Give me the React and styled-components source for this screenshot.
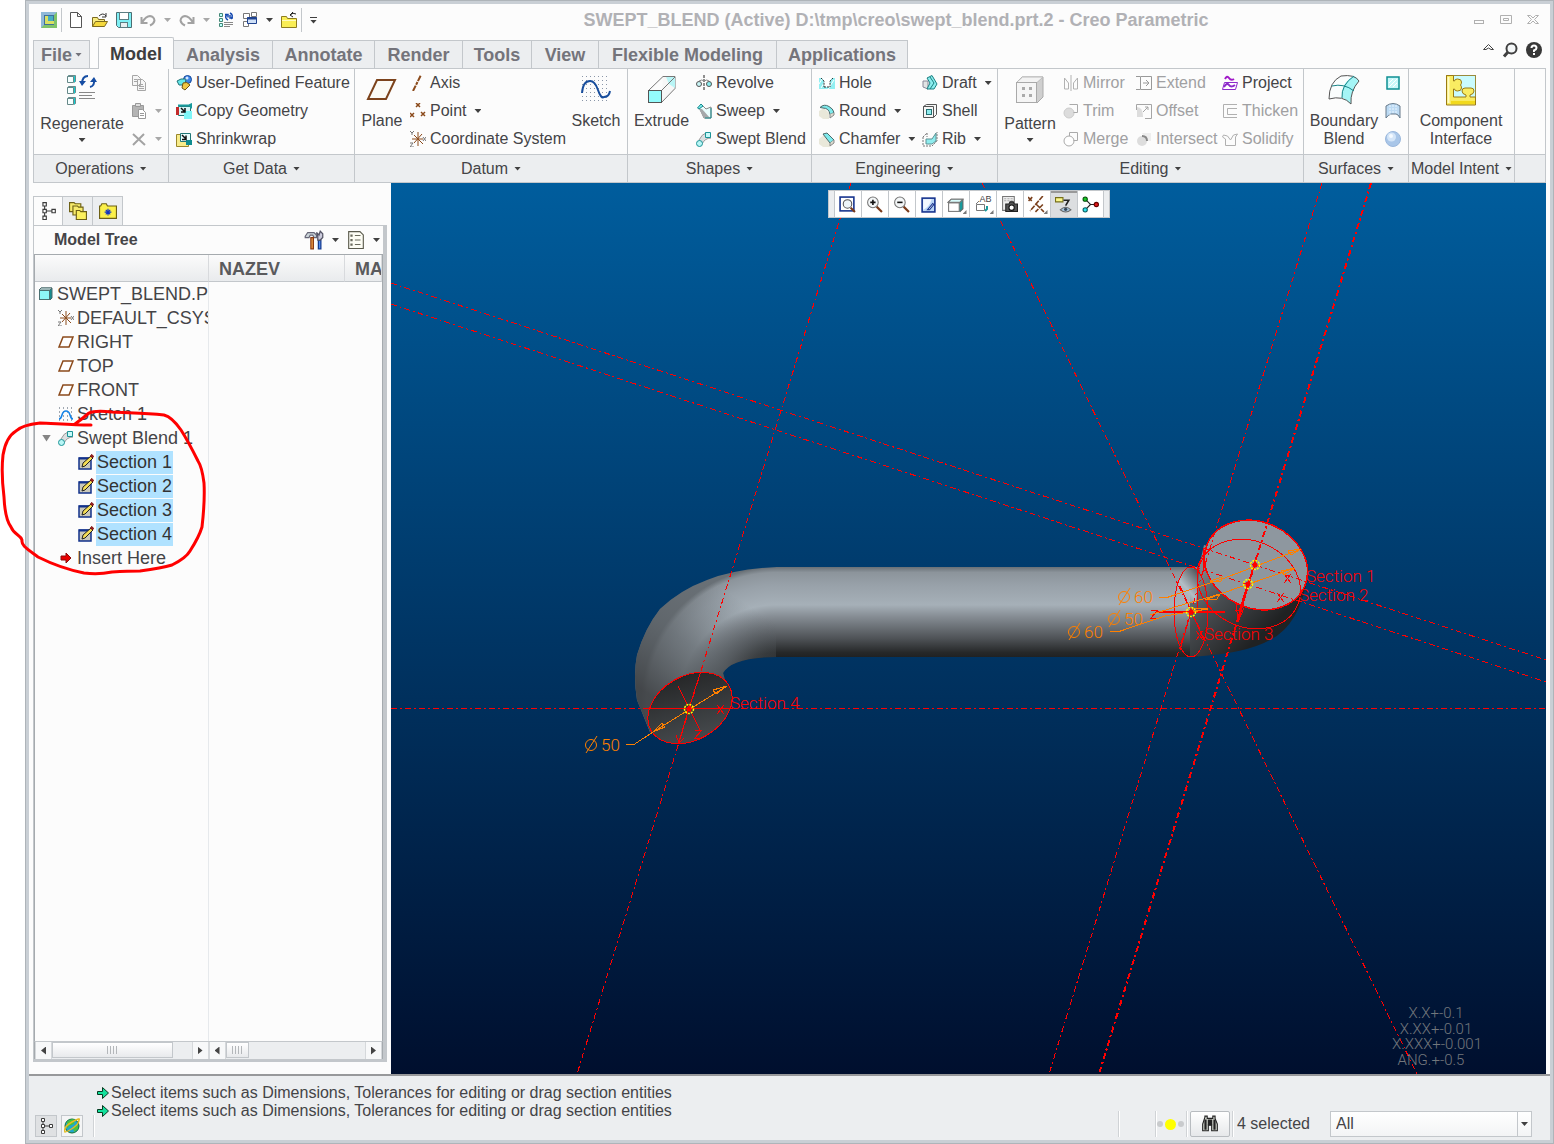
import { useState } from 'react'
import styled, { createGlobalStyle, css } from 'styled-components'

const edge = '#c3c7cb'
const panel = '#fcfcfc'
const soft = '#eceef0'
const ink = '#444447'

const icons = {
    app: <>
        <rect width="16" height="16" fill="#7fc36a" />
        <path d="M0 0h13v13H0z" fill="#b9dfe6" />
        <path d="M0 0h16L13 3H3v10L0 16z" fill="#8fb9d8" />
        <rect x="3" y="3" width="10" height="10" fill="#3f6f9c" />
        <path d="M4 4h3v5h6v3H4z" fill="#d9e063" />
        <rect x="7" y="4" width="5" height="5" fill="#45aec2" />
    </>,
    file: <path d="M2.500 .5h7l4 4v11h-11zM9.500 .5v4h4" fill="#fff" stroke="#555" />,
    open: <>
        <path d="M.5 14.500v-9h5l1 2h6v2" fill="#f8ec80" stroke="#7c6a1e" />
        <path d="M.5 14.500l3-5h12l-3 5z" fill="#f5d93d" stroke="#7c6a1e" />
        <path d="M7 4q4-4 7 0M14 1v4h-4" fill="none" stroke="#333" />
    </>,
    save: <>
        <path d="M.5 .5h15v15h-13l-2-2z" fill="#7ff0f5" stroke="#4b6d72" />
        <rect x="3.500" y=".5" width="9" height="7" fill="#fff" stroke="#5b7d82" />
        <rect x="4.500" y="10.500" width="7" height="5" fill="#e8eef0" stroke="#5b7d82" />
    </>,
    undo: <path d="M1.500 5v6h6M2 10.500Q6 4 10 4q4 .5 4.500 4.500-.5 3-4.500 5" fill="none" stroke="#a2a2a2" strokeWidth="2" />,
    redo: <path d="M14.500 5v6h-6M14 10.500Q10 4 6 4q-4 .5-4.500 4.500.5 3 4.500 5" fill="none" stroke="#a2a2a2" strokeWidth="2" />,
    regenSmall: <>
        <path d="M1.500 1.500h3v3h-3zM1.500 6.500h3v3h-3zM1.500 11.500h3v3h-3z" fill="#bff" stroke="#487" />
        <path d="M6 10.500h9M6 12.500h9M6 14.500h6" stroke="#888" />
        <path d="M10 8Q6 6 9 2M12 1q4 2 1 6M7 2.500h3v3M15 6h-3V3" fill="none" stroke="#1549b0" strokeWidth="1.500" />
    </>,
    windows: <>
        <path d="M1.500 1.500h6v5h-6zM9.500 .5h5v4h-5zM1.500 9.500h5v5h-5z" fill="#fff" stroke="#777" />
        <path d="M5.500 5.500h9v6h-9z" fill="#cfe0f7" stroke="#1f4390" />
        <path d="M5 6.500h10" stroke="#1f4390" strokeWidth="2" />
    </>,
    closeFolder: <>
        <path d="M.5 15.500v-11h5l1 2h9v9z" fill="#faee55" stroke="#8d7c20" />
        <path d="M1 8.500h14" stroke="#fffbc0" />
        <path d="M9 3q3-3 6-1M12 0L9 3l3 2" fill="none" stroke="#222" />
    </>,
    copy: <path d="M1.500 .5h5l3 3v7h-8zM6.500 4.500h5l3 3v8h-8zM3 4.500h3M3 6.500h3M8 9.500h4M8 11.500h5M8 13.500h5" fill="#f6f6f6" stroke="#a6a6a6" />,
    paste: <>
        <path d="M1.500 2.500h11v11h-11z" fill="#b4b4b4" stroke="#999" />
        <path d="M4.500 .5h5v3h-5z" fill="#ddd" stroke="#999" />
        <path d="M7.500 6.500h4l3 3v6h-7zM9 10.500h4M9 12.500h4" fill="#fff" stroke="#999" />
    </>,
    cut: <path d="M2 3l12 11M13 3L2 14" fill="none" stroke="#a3a3a3" strokeWidth="2" />,
    udf: <>
        <circle cx="11.500" cy="4.500" r="4" fill="#3c84e6" stroke="#17489a" />
        <path d="M1 6l4-2h5l-1 6H3z" fill="#63e8ea" stroke="#226f74" />
        <path d="M7 8q4-2 7 2l-5 5-3-2z" fill="#f1c844" stroke="#725612" />
        <circle cx="11" cy="3" r="1.500" fill="#d5e7ff" />
    </>,
    copyGeom: <>
        <path d="M2.500 3.500h12v9h-12z" fill="#d6f6f8" stroke="#277" />
        <path d="M0 4h3v8H0z" fill="#c32a2a" />
        <path d="M8 8h8v8H8z" fill="#7ff5f7" />
        <path d="M5 5l4 4M9 5v4H5" fill="none" stroke="#111" strokeWidth="1.500" />
        <path d="M2 2.500h11l2-1v4" fill="none" stroke="#189a9c" strokeWidth="2" />
    </>,
    shrink: <>
        <path d="M.5 3.500h12v12H.5z" fill="#f8ec8a" stroke="#9b872b" />
        <path d="M4.500 2.500h10v8h-10z" fill="#eaffff" stroke="#277" />
        <path d="M10 9h6v5h-6z" fill="#0f8c8f" />
        <path d="M6 4l4 4M10 4.500v4H6" fill="none" stroke="#111" strokeWidth="1.500" />
    </>,
    axis: <path d="M3 16L11 0" fill="none" stroke="#8b4a1b" strokeWidth="2" strokeDasharray="6 1 3 1" />,
    point: <path d="M6 0l4 4M10 0L6 4M0 10l4 4M4 10l-4 4M11 9l4 4M15 9l-4 4" fill="none" stroke="#8b4a1b" strokeWidth="1.500" />,
    csys: <>
        <path d="M8 1v14M2 8h11M4 4l9 9M12 3L4 12" stroke="#8b4a1b" />
        <path d="M0 0l2 2 2-2M2 2v2M0 12h3L0 16h4M13 6l3 4M16 6l-3 4" fill="none" stroke="#777" />
    </>,
    revolve: <>
        <circle cx="3" cy="9" r="2.500" fill="#c8f5f6" stroke="#555" />
        <circle cx="13" cy="9" r="2.500" fill="#8aeef0" stroke="#555" />
        <path d="M8 0v16" stroke="#222" strokeDasharray="3 1" />
        <path d="M3 6q3-2 5 0M13 6q-2-2-5 0" fill="none" stroke="#888" />
    </>,
    sweep: <>
        <path d="M3 4l3-2 4 4 5-2v11H8z" fill="#e9fdfd" stroke="#888" />
        <path d="M3 6l5 9h6L6 6z" fill="#a5a8aa" />
        <path d="M1.500 5L5 1l2 2-4 3z" fill="#7cecee" stroke="#188a8d" />
        <path d="M15 5v10H9" fill="none" stroke="#188a8d" />
    </>,
    swept: <>
        <path d="M3 9Q6 3 10 2l5 5Q9 7 6 13z" fill="#dddfe0" stroke="#999" />
        <path d="M9.500 1.500h5v5h-5z" fill="#c6fafa" stroke="#1d9497" />
        <circle cx="3.500" cy="12.500" r="3" fill="#b9f6f6" stroke="#1d9497" />
    </>,
    hole: <>
        <path d="M0 3h16v11H0z" fill="#92eff2" />
        <path d="M2 13l5-8M9 14l6-9M0 9l3-5" stroke="#fff" />
        <path d="M3 3h10l-2 3v6H5V6z" fill="#fff" />
        <path d="M2 3l3 3v6M14 3l-3 3v6M5 12h6" fill="none" stroke="#333" strokeDasharray="2 1" />
    </>,
    round: <>
        <path d="M0 8l5-3 5 5v6H4l-4-3z" fill="#e9e8da" />
        <path d="M1 4.500q4-4 9-1 4 2 5 6l-4 2Q10 5 4 5z" fill="#7eeaec" stroke="#4c6a6b" />
        <path d="M11 11v4l4-3v-2" fill="#dcdcd0" stroke="#888" />
    </>,
    chamfer: <>
        <path d="M0 8l5-4 6 6v6H4l-4-3z" fill="#e9e8da" />
        <path d="M4 3l4-1 7 7-4 3z" fill="#7eeaec" stroke="#4c6a6b" />
        <path d="M11 12v3l4-3V9" fill="#dcdcd0" stroke="#888" />
    </>,
    draft: <>
        <path d="M1 6h5v8l-5-2z" fill="#e1e4e4" stroke="#889" />
        <path d="M5 3l5-2.500L15 9l-3 5H5l3-6z" fill="#8bedee" stroke="#1b7f81" />
        <path d="M8 2l4 6-4 6" fill="none" stroke="#1b7f81" />
    </>,
    shell: <>
        <path d="M1.500 3.500h10v11h-10zM1.500 3.500l3-2h10v10l-3 3" fill="#f5f6f6" stroke="#555" />
        <rect x="4.500" y="6.500" width="5" height="5" fill="#8fecee" stroke="#257173" />
    </>,
    rib: <>
        <path d="M1 6l4-4M1 6v9h9l5-5V1M5 2v4" fill="none" stroke="#777" strokeDasharray="2 1" />
        <path d="M4 8h6l4-6v8l-4 3H4z" fill="#8fecee" stroke="#5c9193" />
    </>,
    mirror: <path d="M1.500 3v11h4V8zM14.500 3v11h-4V8zM8 0v16" fill="none" stroke="#b2b2b2" />,
    trim: <>
        <circle cx="6" cy="10" r="5" fill="#dcdcdc" stroke="#ccc" />
        <path d="M6.500 1.500h8v8h-4" fill="none" stroke="#aaa" />
    </>,
    merge: <>
        <circle cx="6" cy="10" r="5" fill="#fff" stroke="#aaa" />
        <path d="M6.500 5V1.500h8v8h-4" fill="none" stroke="#aaa" />
    </>,
    extend: <path d="M4.500 1.500h11v13h-11zM0 1.500h4M0 14.500h4M7 8h6M10 5l3 3-3 3" fill="none" stroke="#999" />,
    offset: <>
        <path d="M1 4q6 0 6 10H1z" fill="#ddd" />
        <path d="M.5 7V1.500h15v14H9M7 9l5-5M9 4h3v3" fill="none" stroke="#a5a5a5" />
    </>,
    intersect: <>
        <circle cx="6" cy="10" r="5" fill="#ddd" />
        <path d="M6 2h9v8h-4z" fill="#eee" />
        <path d="M6 5q5 0 5 5" fill="none" stroke="#888" strokeWidth="2" />
    </>,
    project: <>
        <path d="M3 4q2-4 4-1t5 1" fill="none" stroke="#a018c8" strokeWidth="2" />
        <path d="M2.500 7.500h13l-2 7H.5z" fill="#fff" stroke="#8d2aca" />
        <path d="M2 12q3-5 5-2t6 0" fill="none" stroke="#8d2aca" strokeWidth="2" />
    </>,
    thicken: <path d="M15 1.500H1.500v13H15M15 5.500H5.500v6H15" fill="none" stroke="#b0b0b0" />,
    solidify: <path d="M3.500 14.500h10V6l2-3-4 1-3 5-3-4-4-1-1 2 3 2z" fill="none" stroke="#b0b0b0" />,
    fill: <>
        <rect x="2" y="2" width="12" height="12" fill="#c9f8fa" stroke="#0d8f93" strokeWidth="1.500" />
        <path d="M4 12l8-8M4 8l4-4M8 12l4-4" stroke="#fff" />
    </>,
    style: <>
        <path d="M1 3q7-5 14 0v12q-2-4-4-4H6q-3 1-5 4z" fill="#bcdaf3" stroke="#66798a" />
        <path d="M5 2v10M8 2v9M11 2v9" stroke="#eaf5ff" strokeDasharray="2 1" />
    </>,
    sphere: <>
        <circle cx="8" cy="8" r="7.500" fill="#a9c6e8" stroke="#9ab7dc" />
        <circle cx="6.500" cy="6" r="4.500" fill="#d4e5f8" />
        <circle cx="6" cy="5" r="2" fill="#f4faff" />
    </>,
    part: <>
        <path d="M1 4l2-2h11v10l-2 2" fill="#188c8f" stroke="#4a6a6c" />
        <path d="M1 4l2-2h11l-2 2z" fill="#eaffff" stroke="#4a6a6c" />
        <rect x="1.500" y="4.500" width="10" height="9" fill="#8ef6f8" stroke="#4a7072" />
    </>,
    viewPart: <>
        <path d="M1 6l3-3h11v9l-3 3" fill="#189a9c" stroke="#666" />
        <path d="M1 6l3-3h11l-3 3z" fill="#d9fdfd" stroke="#777" />
        <rect x="1.500" y="6.500" width="10" height="8" fill="#fff" stroke="#777" />
    </>,
    plane: <path d="M5 3h10l-4 10H1z" fill="#fff" stroke="#8b4a1b" strokeWidth="1.500" />,
    sketch: <>
        <path d="M1 2h15M1 6h15M1 10h15M1 14h15" stroke="#456" strokeDasharray="1 3" />
        <path d="M1 13q2 0 3-4t4-4 4 4 3 4" fill="none" stroke="#1383e8" strokeWidth="1.500" />
    </>,
    section: <>
        <rect x="1" y="4" width="12" height="11" fill="#c9c8ba" stroke="#10318a" strokeWidth="1.500" />
        <path d="M1 4.500h12" stroke="#10318a" strokeWidth="2" />
        <path d="M4 13l1-4 8-7 2 2-8 8z" fill="#f4dd55" stroke="#222" />
        <path d="M12.500 2l1-1.500 2 1.500-1 2z" fill="#b92323" stroke="#701010" />
    </>,
    insert: <path d="M3 6h5V3l5 5-5 5v-3H3z" fill="#e80000" stroke="#8b0b0b" />,
    tree: <path d="M3.500 .5h3v3h-3zM3.500 6.500h3v3h-3zM3.500 12.500h3v3h-3zM11.500 6.500h3v3h-3zM5 3.500v3M5 9.500v3M6.500 8h5" fill="#fff" stroke="#3c3c3c" />,
    globe: <>
        <circle cx="8" cy="8" r="7" fill="#20a7cf" stroke="#14702f" />
        <path d="M3 4q4-4 8-2l-1 4-5 2-2 3zM9 9l5-3v5l-4 3z" fill="#4bc43c" />
        <path d="M1 14Q-1 9 8 4t7-2q0 4-6 8t-8 4z" fill="none" stroke="#e5bb25" strokeWidth="1.500" />
    </>,
    binoculars: <>
        <path d="M3.500 2v-1h2v2h5V1h2v2l2 5v6h-5V9h-3v5h-5V8z" fill="#d9ddd5" stroke="#222" />
        <path d="M4 4v9M12 4v9M7 4v5M9 4v5" stroke="#222" strokeWidth="2" />
    </>,
    layers: <>
        <path d="M.5 8.500v-8h4l1 1h5v7z" fill="#f7eb6c" stroke="#6d6015" />
        <path d="M3.500 11.500v-8h4l1 1h4v7z" fill="#f7eb6c" stroke="#6d6015" />
        <path d="M6.500 15.500v-8h3l1 1h5v7z" fill="#fbf05e" stroke="#6d6015" />
    </>,
    favorites: <>
        <path d="M.5 14.500V3.500h1l1-2h4l1 2h8v11z" fill="#fbf04a" stroke="#6d6015" />
        <path d="M8 6v6M5 9h6M6 7l4 4M10 7l-4 4" stroke="#1234c0" />
    </>,
    tools: <>
        <path d="M1 5l2-3h5l2 2v2H8L7 4H5L4 6H1z" fill="#ccd6da" stroke="#667" />
        <path d="M5.500 6h2v9h-2z" fill="#f0a24a" stroke="#8b3a12" />
        <path d="M11.500 8h2v7h-2z" fill="#4f8bf0" stroke="#143b8f" />
        <path d="M11 8V5l-1-3 2 2 1-3 2 2v3l-2 2z" fill="#ccd" stroke="#556" />
    </>,
    list: <>
        <path d="M1.500 .5h10l3 3v12h-13z" fill="#fdfdf4" stroke="#5a5a4c" />
        <path d="M3.500 3.500h1v1h-1zM3.500 7.500h1v1h-1zM3.500 11.500h1v1h-1zM7 4h5M7 8h5M7 12h5" fill="none" stroke="#6a6a5c" />
    </>,
    zoomFit: <>
        <rect x="1" y="1" width="13" height="13" fill="#fff" stroke="#16338e" strokeWidth="1.500" />
        <path d="M11 11l4 4" stroke="#7a3a1a" strokeWidth="2" />
        <circle cx="8" cy="7.500" r="4" fill="#eef6fa" stroke="#555" />
    </>,
    zoomIn: <>
        <path d="M10 10l5 5" stroke="#7a3a1a" strokeWidth="2" />
        <circle cx="6.500" cy="6" r="5" fill="#f4f7f8" stroke="#777" />
        <path d="M4 6h5M6.500 3.500v5" stroke="#111" strokeWidth="1.500" />
    </>,
    zoomOut: <>
        <path d="M10 10l5 5" stroke="#7a3a1a" strokeWidth="2" />
        <circle cx="6.500" cy="6" r="5" fill="#f4f7f8" stroke="#777" />
        <path d="M4 6h5" stroke="#111" strokeWidth="1.500" />
    </>,
    repaint: <>
        <rect x="2" y="2" width="12" height="13" fill="#bcd7f7" stroke="#16338e" strokeWidth="1.500" />
        <path d="M3 3h8Q9 10 3 13z" fill="#f4f9ff" />
        <path d="M7 13l5-6 1 1-4 5z" fill="#fff" stroke="#16338e" />
    </>,
    saved: <>
        <path d="M1 8l3-3h4M1.500 8.500h8v6h-8z" fill="#fff" stroke="#777" />
        <path d="M12 10v3l-2 2" fill="none" stroke="#189a9c" strokeWidth="2" />
    </>,
    camera: <>
        <path d="M1.500 .5h11v13h-11z" fill="#eee" stroke="#777" />
        <path d="M3 2.500h8M3 4.500h8" stroke="#aaa" strokeDasharray="2 1" />
        <path d="M4.500 7.500h3l1-2h3l1 2h3v7h-11z" fill="#555" stroke="#222" />
        <circle cx="10" cy="11" r="2.500" fill="#fff" stroke="#111" />
    </>,
    datum: <path d="M0 1l4 4M4 1L0 5M14 0L2 14M8 8l7 7M14 8l-7 7" stroke="#7a3f1b" strokeWidth="1.500" strokeDasharray="5 1" />,
    annot: <>
        <path d="M.5 1.500h7v4h-7z" fill="#fbf78c" stroke="#77701a" />
        <path d="M8 4h5l-3 5" fill="none" stroke="#222" strokeWidth="1.500" />
        <path d="M5 13q5-5 10 0-5 4-10 0z" fill="#a6c4dc" stroke="#666" />
        <circle cx="10" cy="12.500" r="1.500" fill="#345" />
    </>,
    spin: <>
        <path d="M3 3l5 5h6M8 8l-5 5" fill="none" stroke="#222" />
        <circle cx="3" cy="3" r="2" fill="#19c926" stroke="#064d0b" />
        <circle cx="3" cy="13" r="2" fill="#2de3ea" stroke="#075c60" />
        <circle cx="13.500" cy="8" r="2" fill="#e01818" stroke="#600" />
    </>,
    arrow: <path d="M2.500 6.500h5v-4l6 5.500-6 5.500v-4h-5z" fill="#12e09c" stroke="#053a20" />,
    minimize: <rect x="3.500" y="8.500" width="9" height="3" fill="none" stroke="#b0b0b0" />,
    restore: <path d="M2.500 3.500h11v8h-11zM5.500 6.500h5v2h-5z" fill="none" stroke="#b0b0b0" />,
    close: <path d="M2.500 3.500h3l2.500 2.500 2.500-2.500h3l-4 4 4 4h-3l-2.500-2.500-2.500 2.500h-3l4-4z" fill="none" stroke="#b0b0b0" />,
    collapse: <path d="M5.500 7.500l5-5 5 5h-2.500L10.500 6 8 7.500z" fill="#fff" stroke="#444" />,
    search: <>
        <circle cx="9.500" cy="6.500" r="5" fill="#f4f7f8" stroke="#404040" strokeWidth="2" />
        <path d="M6 10l-4 4.500" stroke="#404040" strokeWidth="3" />
    </>,
    help: <>
        <circle cx="8" cy="8" r="8" fill="#383838" />
        <path d="M5.500 6q0-2.500 2.500-2.500T10.500 6q0 1.500-2.500 2.500v1.500" fill="none" stroke="#fff" strokeWidth="2" />
        <rect x="7" y="11" width="2" height="2" fill="#fff" />
    </>,
    bigRegen: <>
        <path d="M1.500 2.500l1-1h7v6l-1 1M1.500 13.500l1-1h7v6l-1 1M1.500 24.500l1-1h7v6l-1 1" fill="#13cfd2" stroke="#6b8b8c" />
        <path d="M1.500 2.500h6v6h-6zM1.500 13.500h6v6h-6zM1.500 24.500h6v6h-6z" fill="#f6ffff" stroke="#688" />
        <path d="M13 18.500h16M13 21.500h13M13 24.500h16" stroke="#888" />
        <path d="M22 2q-6 0-6 8M24 13q5-1 4-8" fill="none" stroke="#164da3" strokeWidth="2" />
        <path d="M13 7h7l-4 5zM24 8l4-5 3 5z" fill="#164da3" />
    </>,
    bigPlane: <path d="M11 6h18l-9 19H2z" fill="#fbfbf6" stroke="#7c431c" strokeWidth="2" />,
    bigSketch: <>
        <path d="M2 2.500h28M2 6.500h28M2 10.500h28M2 14.500h28M2 18.500h28M2 22.500h28M2 26.500h28" stroke="#8a96a8" strokeDasharray="1 3" />
        <path d="M2 19Q3 7 10 7q5 0 8 9t6 7q5 0 6-6" fill="none" stroke="#174d9c" strokeWidth="2" />
    </>,
    bigExtrude: <>
        <path d="M17 2.500h12v12L15.500 28.500M2.500 16.500L17 2.500" fill="#f7f7f7" stroke="#777" />
        <path d="M20 3h9v11l-6-4z" fill="#b9f5f6" />
        <path d="M29 3L15.500 16.500" stroke="#777" />
        <rect x="2.500" y="16.500" width="13" height="12" fill="#94fbfc" stroke="#555" />
    </>,
    bigPattern: <>
        <path d="M2 9l6-6h21v20l-6 6z" fill="#cfcfcf" stroke="#aaa" />
        <path d="M2.500 8.500l6-5.500H29l-6 5.500z" fill="#f3f3f3" stroke="#bbb" />
        <rect x="2.500" y="8.500" width="20" height="20" fill="#f5f5f5" stroke="#a9a9a9" />
        <path d="M8 13h3v3H8zM15 13h3v3h-3zM8 20h3v3H8zM15 20h3v3h-3z" fill="#aaa" />
    </>,
    bigBlend: <>
        <path d="M1 25Q1 8 13 2q14-2 18 5-9 10-8 23-8-9-22-5z" fill="#fafdfd" />
        <path d="M16 11Q21 4 26 2q4 2 5 5-9 10-8 23l-9-7q0-8 2-12z" fill="#a5f5f6" />
        <path d="M1 25Q1 8 13 2q14-2 18 5-9 10-8 23-8-9-22-5z" fill="none" stroke="#555" />
        <path d="M4 12q12-3 22 5M26 2Q13 11 14 24" fill="none" stroke="#178387" />
    </>,
    bigComponent: <>
        <rect x="1.500" y="1.500" width="29" height="29" fill="#c9fbfd" stroke="#9a8a3c" />
        <path d="M1.500 1.500H8.500V7h1q0-2 3-2 4 0 4 3 0 2-1 3 1 1 1 3 0 3-4 3-3 0-3-2h-1v8H21v-2q-4-1-4-4 0-3 3-3h6q3 0 3 3t-4 4v2h5.500v8H1.500z" fill="#f9ec62" stroke="#9a7a14" />
        <path d="M3.500 3v26" stroke="#fffbc6" strokeWidth="2" />
        <path d="M6 28.500h24" stroke="#f2d91c" strokeWidth="3" />
    </>,
}

function Icon({ name, size = 16 }) {
    const box = name.startsWith('big') ? 32 : 16
    return <Glyph viewBox={`0 0 ${box} ${box}`} $size={box === 32 ? 32 : size} aria-hidden="true">{icons[name]}</Glyph>
}

function Tool({ icon, text, menu, off }) {
    return (
        <SmallTool disabled={off} aria-label={text || icon}>
            <Icon name={icon} />
            {text}
            {menu && <Caret />}
        </SmallTool>
    )
}

function BigTool({ icon, text, menu, width }) {
    return (
        <LargeTool $menu={menu} $w={width}>
            <Icon name={icon} />
            <span>{text}</span>
            {menu && <Caret />}
        </LargeTool>
    )
}

function Group({ name, width, children }) {
    return (
        <GroupBox $w={width}>
            <GroupBody>{children}</GroupBody>
            <GroupName>{name}<Caret /></GroupName>
        </GroupBox>
    )
}

const tabs = [
    ['Analysis', 99], ['Annotate', 102], ['Render', 88], ['Tools', 69],
    ['View', 67], ['Flexible Modeling', 178], ['Applications', 131],
]

const nodes = [
    { icon: 'part', text: 'SWEPT_BLEND.P', depth: 0 },
    { icon: 'csys', text: 'DEFAULT_CSYS', depth: 1 },
    { icon: 'plane', text: 'RIGHT', depth: 1 },
    { icon: 'plane', text: 'TOP', depth: 1 },
    { icon: 'plane', text: 'FRONT', depth: 1 },
    { icon: 'sketch', text: 'Sketch 1', depth: 1 },
    { icon: 'swept', text: 'Swept Blend 1', depth: 1, open: true },
    { icon: 'section', text: 'Section 1', depth: 2, picked: true },
    { icon: 'section', text: 'Section 2', depth: 2, picked: true },
    { icon: 'section', text: 'Section 3', depth: 2, picked: true },
    { icon: 'section', text: 'Section 4', depth: 2, picked: true },
    { icon: 'insert', text: 'Insert Here', depth: 1 },
]

const viewTools = ['zoomFit', 'zoomIn', 'zoomOut', 'repaint', 'viewPart', 'saved', 'camera', 'datum', 'annot', 'spin']
const message = 'Select items such as Dimensions, Tolerances for editing or drag section entities'

export default function App() {
    const [filter, setFilter] = useState('All')

    return (
        <>
            <Reset />
            <Frame>
                <Main>
                    <TitleBar>
                        <QuickBar>
                            <IconButton aria-label="Creo"><Icon name="app" /></IconButton>
                            <Divider />
                            <IconButton aria-label="New"><Icon name="file" /></IconButton>
                            <IconButton aria-label="Open"><Icon name="open" /></IconButton>
                            <IconButton aria-label="Save"><Icon name="save" /></IconButton>
                            <IconButton aria-label="Undo"><Icon name="undo" /></IconButton>
                            <Caret $off />
                            <IconButton aria-label="Redo"><Icon name="redo" /></IconButton>
                            <Caret $off />
                            <IconButton aria-label="Regenerate"><Icon name="regenSmall" /></IconButton>
                            <IconButton aria-label="Windows"><Icon name="windows" /></IconButton>
                            <Caret />
                            <IconButton aria-label="Close"><Icon name="closeFolder" /></IconButton>
                            <Divider />
                            <MoreCaret aria-label="Customize"><Caret /></MoreCaret>
                        </QuickBar>
                        <Title>SWEPT_BLEND (Active) D:\tmp\creo\swept_blend.prt.2 - Creo Parametric</Title>
                        <WindowButtons>
                            <IconButton aria-label="Minimize"><Icon name="minimize" /></IconButton>
                            <IconButton aria-label="Restore"><Icon name="restore" /></IconButton>
                            <IconButton aria-label="Close window"><Icon name="close" /></IconButton>
                        </WindowButtons>
                    </TitleBar>

                    <TabBar>
                        <FileTab>File<Caret /></FileTab>
                        <ActiveTab>Model</ActiveTab>
                        {tabs.map(([name, width]) => <Tab key={name} $w={width}>{name}</Tab>)}
                        <Help>
                            <IconButton aria-label="Collapse"><Icon name="collapse" /></IconButton>
                            <IconButton aria-label="Search"><Icon name="search" /></IconButton>
                            <IconButton aria-label="Help"><Icon name="help" /></IconButton>
                        </Help>
                    </TabBar>

                    <Ribbon>
                        <Group name="Operations" width={135}>
                            <BigTool icon="bigRegen" text="Regenerate" menu width={82} />
                            <Column>
                                <Tool icon="copy" off />
                                <Tool icon="paste" menu off />
                                <Tool icon="cut" menu off />
                            </Column>
                        </Group>
                        <Group name="Get Data" width={186}>
                            <Column>
                                <Tool icon="udf" text="User-Defined Feature" />
                                <Tool icon="copyGeom" text="Copy Geometry" />
                                <Tool icon="shrink" text="Shrinkwrap" />
                            </Column>
                        </Group>
                        <Group name="Datum" width={273}>
                            <BigTool icon="bigPlane" text="Plane" width={40} />
                            <Column $w={154}>
                                <Tool icon="axis" text="Axis" />
                                <Tool icon="point" text="Point" menu />
                                <Tool icon="csys" text="Coordinate System" />
                            </Column>
                            <BigTool icon="bigSketch" text="Sketch" width={48} />
                        </Group>
                        <Group name="Shapes" width={184}>
                            <BigTool icon="bigExtrude" text="Extrude" width={53} />
                            <Column>
                                <Tool icon="revolve" text="Revolve" />
                                <Tool icon="sweep" text="Sweep" menu />
                                <Tool icon="swept" text="Swept Blend" />
                            </Column>
                        </Group>
                        <Group name="Engineering" width={186}>
                            <Column $w={95}>
                                <Tool icon="hole" text="Hole" />
                                <Tool icon="round" text="Round" menu />
                                <Tool icon="chamfer" text="Chamfer" menu />
                            </Column>
                            <Column>
                                <Tool icon="draft" text="Draft" menu />
                                <Tool icon="shell" text="Shell" />
                                <Tool icon="rib" text="Rib" menu />
                            </Column>
                        </Group>
                        <Group name="Editing" width={306}>
                            <BigTool icon="bigPattern" text="Pattern" menu width={50} />
                            <Column $w={65}>
                                <Tool icon="mirror" text="Mirror" off />
                                <Tool icon="trim" text="Trim" off />
                                <Tool icon="merge" text="Merge" off />
                            </Column>
                            <Column $w={78}>
                                <Tool icon="extend" text="Extend" off />
                                <Tool icon="offset" text="Offset" off />
                                <Tool icon="intersect" text="Intersect" off />
                            </Column>
                            <Column>
                                <Tool icon="project" text="Project" />
                                <Tool icon="thicken" text="Thicken" off />
                                <Tool icon="solidify" text="Solidify" off />
                            </Column>
                        </Group>
                        <Group name="Surfaces" width={105}>
                            <BigTool icon="bigBlend" text="Boundary Blend" width={66} />
                            <Column>
                                <Tool icon="fill" />
                                <Tool icon="style" />
                                <Tool icon="sphere" />
                            </Column>
                        </Group>
                        <Group name="Model Intent" width={106}>
                            <BigTool icon="bigComponent" text="Component Interface" width={90} />
                        </Group>
                        <GroupBox>
                            <GroupBody />
                            <GroupName />
                        </GroupBox>
                    </Ribbon>

                    <Work>
                        <Sidebar>
                            <PaneTabs>
                                <PaneTab $on aria-label="Model Tree"><Icon name="tree" size={18} /></PaneTab>
                                <PaneTab aria-label="Layers"><Icon name="layers" size={18} /></PaneTab>
                                <PaneTab aria-label="Favorites"><Icon name="favorites" size={18} /></PaneTab>
                            </PaneTabs>
                            <Pane>
                                <PaneHead>
                                    <h2>Model Tree</h2>
                                    <IconButton aria-label="Settings"><Icon name="tools" size={20} /></IconButton>
                                    <Caret />
                                    <IconButton aria-label="Show"><Icon name="list" size={18} /></IconButton>
                                    <Caret />
                                </PaneHead>
                                <TreeBox>
                                    <TreeTable>
                                        <colgroup>
                                            <col width="174" />
                                            <col width="136" />
                                            <col />
                                        </colgroup>
                                        <thead>
                                            <tr><th aria-label="Item" /><th>NAZEV</th><th>MA</th></tr>
                                        </thead>
                                        <tbody>
                                            {nodes.map((node) =>
                                                <tr key={node.text}>
                                                    <td>
                                                        <Node>
                                                            <Indent $depth={node.depth}>{node.open && <Expander />}</Indent>
                                                            <Icon name={node.icon} />
                                                            <NodeName $picked={node.picked}>{node.text}</NodeName>
                                                        </Node>
                                                    </td>
                                                    <td />
                                                    <td />
                                                </tr>)}
                                        </tbody>
                                    </TreeTable>
                                </TreeBox>
                                <Scrolls>
                                    <ScrollBar>
                                        <ScrollEnd aria-label="Scroll left"><Triangle $left /></ScrollEnd>
                                        <Thumb $w={121}><Grip /></Thumb>
                                        <ScrollEnd aria-label="Scroll right"><Triangle /></ScrollEnd>
                                    </ScrollBar>
                                    <ScrollBar>
                                        <ScrollEnd aria-label="Scroll left"><Triangle $left /></ScrollEnd>
                                        <Thumb $w={23}><Grip /></Thumb>
                                        <ScrollEnd aria-label="Scroll right"><Triangle /></ScrollEnd>
                                    </ScrollBar>
                                </Scrolls>
                            </Pane>
                        </Sidebar>
                        <Viewport>
                            <Scene />
                            <ViewBar>
                                {viewTools.map((name) =>
                                    <ViewButton key={name} aria-label={name} $on={name === 'annot'}>
                                        <Icon name={name} size={name === 'saved' ? 16 : 17} />
                                        {name === 'saved' && <Badge>AB</Badge>}
                                        {['viewPart', 'saved', 'datum'].includes(name) && <Corner />}
                                    </ViewButton>)}
                            </ViewBar>
                        </Viewport>
                    </Work>

                    <StatusBar>
                        <PaneSwitch>
                            <StatusButton $on aria-label="Toggle tree"><Icon name="tree" /></StatusButton>
                            <StatusButton aria-label="Toggle browser"><Icon name="globe" /></StatusButton>
                            <StatusLine />
                        </PaneSwitch>
                        <Messages>
                            <li><Icon name="arrow" />{message}</li>
                            <li><Icon name="arrow" />{message}</li>
                        </Messages>
                        <StatusTools>
                            <StatusLine />
                            <Spacer />
                            <StatusLine />
                            <Lights><i /><b /><i /></Lights>
                            <StatusLine />
                            <FindButton aria-label="Find"><Icon name="binoculars" size={18} /></FindButton>
                            <StatusLine />
                            <Count>4 selected</Count>
                            <Filter>
                                <select aria-label="Selection filter" value={filter} onChange={(e) => setFilter(e.target.value)}>
                                    <option>All</option>
                                </select>
                                <FilterArrow><Caret /></FilterArrow>
                            </Filter>
                        </StatusTools>
                    </StatusBar>
                </Main>
            </Frame>
            <Marker viewBox="0 0 210 180" aria-hidden="true">
                <path d="M91 24C70 24 50 22 40 22Q22 24 16 30Q6 36 3 54Q1 72 4 96Q5 118 11 126C14 134 21 134 22 139C21 144 26 147 38 156C50 162 64 168 84 172Q98 174 112 171Q128 170 140 170Q162 167 172 164Q186 157 190 150Q199 136 202 126Q205 100 204 82Q202 66 198 60C193 50 188 40 181 29Q172 16 164 14C145 12 130 12 112 11Q95 9 89 12Q82 18 75 23" />
            </Marker>
        </>
    )
}

function Diameter({ x, y, value }) {
    return (
        <g>
            <circle cx={x} cy={y - 6} r="5.500" fill="none" stroke="#ff8000" />
            <path d={`M${x - 5} ${y + 2}L${x + 6} ${y - 15}`} stroke="#ff8000" />
            <text x={x + 10} y={y} fill="#ff8000">{value}</text>
        </g>
    )
}

function Hub({ x, y }) {
    return (
        <g fill="none">
            <circle cx={x} cy={y} r="2.500" fill="#f00" />
            <circle cx={x} cy={y} r="4.500" stroke="#ffff00" strokeWidth="1.500" strokeDasharray="2 1" />
        </g>
    )
}

const elbow = 'M777 567Q735 569 707 580Q680 590 660 609Q645 628 637 655Q633 675 637 700L650 732L690 735L728 690L723 673Q732 657 777 657Z'

function Scene() {
    return (
        <Canvas viewBox="391 183 1155 891" preserveAspectRatio="xMidYMid slice">
            <defs>
                <linearGradient id="tube" gradientUnits="userSpaceOnUse" x1="0" y1="567" x2="0" y2="657">
                    <stop offset="0" stopColor="#697076" />
                    <stop offset=".06" stopColor="#8c949b" />
                    <stop offset=".2" stopColor="#98a1a9" />
                    <stop offset=".42" stopColor="#a6b0b8" />
                    <stop offset=".55" stopColor="#868d94" />
                    <stop offset=".8" stopColor="#4d5155" />
                    <stop offset=".95" stopColor="#262829" />
                    <stop offset="1" stopColor="#202223" />
                </linearGradient>
                <radialGradient id="elbow" gradientUnits="userSpaceOnUse" cx="776" cy="702" r="141">
                    <stop offset=".319" stopColor="#202223" />
                    <stop offset=".351" stopColor="#262829" />
                    <stop offset=".447" stopColor="#4d5155" />
                    <stop offset=".606" stopColor="#868d94" />
                    <stop offset=".689" stopColor="#a6b0b8" />
                    <stop offset=".83" stopColor="#98a1a9" />
                    <stop offset=".919" stopColor="#8c949b" />
                    <stop offset=".957" stopColor="#697076" />
                </radialGradient>
                <linearGradient id="shade" gradientUnits="userSpaceOnUse" x1="728" y1="592" x2="658" y2="700">
                    <stop offset="0" stopColor="#62686d" stopOpacity="0" />
                    <stop offset=".5" stopColor="#5a6065" stopOpacity=".65" />
                    <stop offset="1" stopColor="#404346" stopOpacity=".92" />
                </linearGradient>
                <linearGradient id="cap" gradientUnits="userSpaceOnUse" x1="715" y1="675" x2="700" y2="740">
                    <stop offset="0" stopColor="#242526" />
                    <stop offset="1" stopColor="#44484b" />
                </linearGradient>
                <linearGradient id="neck" gradientUnits="userSpaceOnUse" x1="1190" y1="580" x2="1250" y2="645">
                    <stop offset="0" stopColor="#7d858b" />
                    <stop offset=".4" stopColor="#484c50" />
                    <stop offset="1" stopColor="#202223" />
                </linearGradient>
                <linearGradient id="glow" gradientUnits="userSpaceOnUse" x1="1172" y1="600" x2="1200" y2="575">
                    <stop offset="0" stopColor="#a6b0b8" stopOpacity="0" />
                    <stop offset=".5" stopColor="#b3bdc5" />
                    <stop offset="1" stopColor="#555a5f" />
                </linearGradient>
            </defs>

            <path d={elbow} fill="url(#elbow)" />
            <path d={elbow} fill="url(#shade)" />
            <path d="M776 567H1198V657H776Z" fill="url(#tube)" />
            <path d="M1190 567L1199 567L1204 545L1308 575Q1300 625 1270 640Q1245 654 1190 657Z" fill="url(#neck)" />
            <path d="M1176 603Q1177 570 1191 568L1200 570L1196 603Z" fill="url(#glow)" />
            <g shapeRendering="crispEdges">
                <ellipse cx="690" cy="708" rx="45" ry="32" transform="rotate(-30 690 708)" fill="url(#cap)" stroke="#f00" />
                <ellipse cx="1256" cy="565" rx="53" ry="43" transform="rotate(24 1256 565)" fill="#8e979f" stroke="#f00" strokeWidth="1.500" />
            </g>

            <g fill="none" stroke="#f00" shapeRendering="crispEdges">
                <g strokeDasharray="6 3 2 3">
                    <path d="M851 183L577 1074M982 183L1417 1074M391 283L1546 660M391 304L1546 682M1322 183L1049 1074M391 708.500H1546" />
                    <path d="M1371 183L1099 1074" strokeWidth="2" />
                </g>
                <ellipse cx="1249" cy="584" rx="53" ry="43" transform="rotate(24 1249 584)" />
                <ellipse cx="1191" cy="612" rx="17" ry="45" />
                <path d="M1197 610V568L1206 548M1203 572V548" />
                <path d="M1156 612H1225M1257 555L1238 620M1248 584L1240 610" strokeWidth="2" />
                <path d="M1236 602L1238 622L1244 608M1235 610H1243" />
                <path d="M1191 612L1180 650M1180 586L1204 640M1151 610H1158L1151 618H1158" />
                <path d="M650 708.500H732M678 686L701 732M689 708L700 674M689 708L679 742M676 735L679 743L684 738M695 730H702L695 738H702" />
                <path d="M1284 574l7 9M1291 574l-7 9M1277 593l7 9M1284 593l-7 9M1196 631l7 9M1203 631l-7 9M717 705l7 9M724 705l-7 9" />
            </g>
            <g fill="none" stroke="#ff8000" shapeRendering="crispEdges">
                <path d="M1159 597.500H1167L1222 579L1301 549M1288 551L1301 549L1291 555ZM1210 581L1222 577L1221 581Z" />
                <path d="M1150 615L1175 607L1220 594L1295 568M1281 571L1295 568L1284 575ZM1205 600L1220 594L1217 599Z" />
                <path d="M1110 631.500H1119L1165 616L1208 609M1192 609L1208 608L1195 612Z" />
                <path d="M626 744.500H634L653 732L727 686M653 732L662 723L665 727ZM727 686L713 690L716 694Z" />
            </g>
            <Hub x={1255} y={565} />
            <Hub x={1248} y={584} />
            <Hub x={1191} y={612} />
            <Hub x={689} y={709} />
            <Diameter x={1124} y={603} value="60" />
            <Diameter x={1114} y={625} value="50" />
            <Diameter x={1074} y={638} value="60" />
            <Diameter x={591} y={751} value="50" />
            <g fill="#f00">
                <text x="1306" y="582">Section 1</text>
                <text x="1299" y="601">Section 2</text>
                <text x="1204" y="640">Section 3</text>
                <text x="730" y="709">Section 4</text>
            </g>
            <Tolerances>
                <text x="1436" y="1018">X.X+-0.1</text>
                <text x="1436" y="1034">X.XX+-0.01</text>
                <text x="1437" y="1049">X.XXX+-0.001</text>
                <text x="1431" y="1065">ANG.+-0.5</text>
            </Tolerances>
        </Canvas>
    )
}

const Reset = createGlobalStyle`
* {
    box-sizing: border-box;
}
body {
    margin: 0;
    background: #fff;
    color: ${ink};
    font: 16px/18px "Liberation Sans", Arial, sans-serif;
}
button {
    padding: 0;
    border: 0;
    background: none;
    color: inherit;
    font: inherit;
}
ul {
    margin: 0;
    padding: 0;
    list-style: none;
}
`

const Frame = styled.div`
display: flex;
min-height: 100vh;
margin-left: 25px;
padding: 3px;
border: 1px solid #aeb4b9;
background: #c9cfd5;
`

const Main = styled.main`
display: flex;
flex-direction: column;
flex: 1;
min-width: 0;
background: ${panel};
`

const Glyph = styled.svg`
display: block;
flex: none;
width: ${({ $size }) => $size}px;
height: ${({ $size }) => $size}px;
`

const Caret = styled.span`
flex: none;
width: 7px;
height: 4px;
background: ${({ $off }) => $off ? '#a8a8a8' : '#404040'};
clip-path: polygon(0 0, 100% 0, 50% 100%);
`

const IconButton = styled.button`
display: flex;
flex: none;
`

const TitleBar = styled.header`
display: flex;
align-items: center;
height: 32px;
padding: 0 9px 0 12px;
`

const QuickBar = styled.div`
display: flex;
align-items: center;
gap: 8px;
width: 280px;
`

const Divider = styled.span`
width: 1px;
height: 24px;
margin: 0 -2px 0 -4px;
background: ${edge};
`

const MoreCaret = styled.button`
display: flex;
margin-left: 2px;
padding-top: 2px;
border-top: 1px solid #404040;
`

const Title = styled.h1`
flex: 1;
margin: 0;
color: #b1b1b5;
font-size: 18px;
font-weight: bold;
line-height: 20px;
text-align: center;
white-space: nowrap;
`

const WindowButtons = styled.div`
display: flex;
gap: 11px;
`

const TabBar = styled.nav`
display: flex;
align-items: flex-end;
height: 32px;
padding: 0 4px;
`

const Tab = styled.button`
width: ${({ $w }) => $w}px;
height: 28px;
border: 1px solid ${edge};
border-width: 1px 1px 0 0;
background: ${soft};
color: #74747b;
font-size: 18px;
font-weight: bold;
line-height: 26px;
`

const FileTab = styled(Tab)`
display: flex;
align-items: center;
justify-content: center;
gap: 3px;
width: 57px;
border-left-width: 1px;
${Caret} {
    background: #74747b;
}
`

const ActiveTab = styled(Tab)`
width: 76px;
height: 32px;
margin: 0 0 -1px 8px;
border-left-width: 1px;
border-radius: 2px 2px 0 0;
background: ${panel};
color: #3e3e40;
z-index: 1;
`

const Help = styled.div`
display: flex;
gap: 8px;
align-self: flex-start;
margin: 6px 4px 0 auto;
`

const Ribbon = styled.section`
display: flex;
height: 115px;
margin: 0 4px;
border: 1px solid ${edge};
border-right-width: 0;
`

const GroupBox = styled.div`
display: flex;
flex-direction: column;
width: ${({ $w }) => $w}px;
flex: ${({ $w }) => $w ? 'none' : 1};
border-right: 1px solid ${edge};
`

const GroupBody = styled.div`
display: flex;
flex: 1;
gap: 8px;
padding: 0 7px;
`

const GroupName = styled.div`
display: flex;
align-items: center;
justify-content: center;
gap: 6px;
height: 28px;
border-top: 1px solid ${edge};
background: ${soft};
white-space: nowrap;
`

const Column = styled.div`
display: flex;
flex-direction: column;
width: ${({ $w }) => $w ? `${$w}px` : 'auto'};
`

const SmallTool = styled.button`
display: flex;
align-items: center;
gap: 4px;
height: 28px;
white-space: nowrap;
${Caret} {
    margin-left: 4px;
}
&:disabled {
    color: #a0a0a2;
    ${Caret} {
        background: #a8a8a8;
    }
}
`

const LargeTool = styled.button`
display: flex;
flex-direction: column;
align-items: center;
gap: ${({ $menu }) => $menu ? 9 : 6}px;
width: ${({ $w }) => $w}px;
padding-top: 5px;
${Caret} {
    margin-top: -4px;
}
`

const Work = styled.div`
display: flex;
flex: 1;
padding-right: 4px;
`

const Sidebar = styled.aside`
display: flex;
flex-direction: column;
flex: none;
width: 362px;
padding: 13px 4px 12px;
`

const PaneTabs = styled.div`
display: flex;
height: 29px;
`

const PaneTab = styled.button`
display: flex;
align-items: center;
justify-content: center;
width: 30px;
border: 1px solid ${edge};
border-width: 1px 1px 0 ${({ $on }) => $on ? 1 : 0}px;
background: ${({ $on }) => $on ? panel : soft};
`

const Pane = styled.div`
display: flex;
flex-direction: column;
flex: 1;
border: 1px solid ${edge};
border-right-width: 4px;
border-bottom-width: 3px;
`

const PaneHead = styled.div`
display: flex;
align-items: center;
gap: 8px;
height: 28px;
padding: 0 3px 0 20px;
h2 {
    flex: 1;
    margin: 0;
    font-size: 16px;
}
`

const TreeBox = styled.div`
flex: 1;
border: 1px solid #a5aaae;
border-bottom-width: 0;
background: linear-gradient(to right, transparent 173px, #e6e9ec 173px, #e6e9ec 174px, transparent 174px);
`

const TreeTable = styled.table`
width: 100%;
border-spacing: 0;
table-layout: fixed;
font-size: 18px;
th {
    height: 27px;
    padding: 2px 0 0 10px;
    border-right: 1px solid #d8dadd;
    border-bottom: 1px solid ${edge};
    background: linear-gradient(#fbfbfb, #e9ebed);
    color: #5a5a5d;
    line-height: 20px;
    text-align: left;
    overflow: hidden;
}
td {
    height: 24px;
    padding: 0;
    overflow: hidden;
}
`

const Node = styled.div`
display: flex;
align-items: center;
height: 24px;
overflow: hidden;
margin-right: 1px;
`

const Indent = styled.span`
display: flex;
flex: none;
justify-content: flex-end;
width: ${({ $depth }) => 3 + $depth * 20}px;
padding-right: ${({ $depth }) => $depth ? 7 : 0}px;
`

const Expander = styled.span`
width: 9px;
height: 7px;
background: #858585;
clip-path: polygon(0 0, 100% 0, 50% 100%);
`

const NodeName = styled.span`
margin-left: 2px;
padding: 1px 1px 2px;
line-height: 20px;
white-space: nowrap;
${({ $picked }) => $picked && css`
    background: #b0e2ff;
    color: #333;
`}
`

const Scrolls = styled.div`
display: grid;
grid-template-columns: 1fr 1fr;
height: 18px;
border: 1px solid #a5aaae;
border-top-color: ${edge};
border-bottom-width: 0;
`

const ScrollBar = styled.div`
display: flex;
background: ${soft};
`

const ScrollEnd = styled.button`
display: flex;
align-items: center;
justify-content: center;
width: 17px;
border: 1px solid #d5d8db;
border-width: 0 1px;
background: #f7f8f9;
&:last-child {
    margin-left: auto;
}
`

const Triangle = styled.span`
width: 5px;
height: 8px;
background: #444;
clip-path: ${({ $left }) => $left ? 'polygon(100% 0, 100% 100%, 0 50%)' : 'polygon(0 0, 100% 50%, 0 100%)'};
`

const Thumb = styled.div`
display: flex;
align-items: center;
justify-content: center;
width: ${({ $w }) => $w}px;
height: 16px;
border: 1px solid ${edge};
background: linear-gradient(#fff, #e8eaec);
`

const Grip = styled.span`
width: 11px;
height: 8px;
background: repeating-linear-gradient(to right, #b4b7ba 0 1px, transparent 1px 3px);
`

const Viewport = styled.section`
position: relative;
flex: 1;
min-width: 0;
background: linear-gradient(#005d9d, #000f2e);
overflow: hidden;
`

const Canvas = styled.svg`
display: block;
position: absolute;
inset: 0;
width: 100%;
height: 100%;
text {
    font: 300 17px Roboto, "Liberation Sans", sans-serif;
}
`

const Tolerances = styled.g`
fill: #73777c;
text-anchor: middle;
&& text {
    font-size: 15px;
}
`

const ViewBar = styled.div`
position: absolute;
top: 7px;
left: 50%;
display: flex;
height: 28px;
padding: 0 5px;
border: 1px solid ${edge};
background: ${soft};
transform: translateX(-50%);
`

const ViewButton = styled.button`
position: relative;
display: flex;
align-items: center;
justify-content: center;
width: 27px;
border-left: 1px solid ${edge};
background: ${({ $on }) => $on ? '#dcdee0' : '#fff'};
box-shadow: ${({ $on }) => $on ? 'inset 0 2px 0 #999' : 'none'};
&:last-child {
    border-right: 1px solid ${edge};
}
`

const Badge = styled.span`
position: absolute;
top: 4px;
right: 4px;
background: #fff;
font-size: 9px;
line-height: 9px;
`

const Corner = styled.span`
position: absolute;
right: 2px;
bottom: 3px;
width: 4px;
height: 4px;
background: #777;
clip-path: polygon(100% 0, 100% 100%, 0 100%);
`

const StatusBar = styled.footer`
display: flex;
height: 66px;
padding: 0 18px 3px 6px;
border-top: 2px solid #98999b;
background: ${soft};
`

const PaneSwitch = styled.div`
display: flex;
align-items: flex-end;
gap: 4px;
`

const StatusButton = styled.button`
display: flex;
align-items: center;
justify-content: center;
width: 22px;
height: 22px;
border: 1px solid ${edge};
background: ${({ $on }) => $on ? '#dfe1e3' : '#f4f5f6'};
`

const StatusLine = styled.span`
width: 2px;
height: 26px;
border-left: 1px solid #d0d3d6;
background: #fff;
${PaneSwitch} & {
    height: 22px;
    margin-left: 6px;
}
`

const Messages = styled.ul`
flex: 1;
padding-top: 8px;
li {
    display: flex;
    align-items: center;
    height: 18px;
    white-space: nowrap;
}
`

const StatusTools = styled.div`
display: flex;
align-items: flex-end;
`

const Spacer = styled.span`
width: 35px;
`

const Lights = styled.span`
display: flex;
align-items: center;
gap: 2px;
width: 29px;
height: 26px;
i, b {
    width: 6px;
    height: 6px;
    border-radius: 50%;
    background: #c9cbcd;
}
b {
    width: 11px;
    height: 11px;
    background: #ff0;
}
`

const FindButton = styled.button`
display: flex;
align-items: center;
justify-content: center;
width: 40px;
height: 26px;
margin: 0 2px;
border: 1px solid #b8bcc0;
border-radius: 2px;
background: linear-gradient(#fff, #e6e8ea);
`

const Count = styled.span`
width: 96px;
padding-left: 3px;
line-height: 26px;
`

const Filter = styled.div`
display: grid;
width: 202px;
height: 26px;
select, span {
    grid-area: 1 / 1;
}
select {
    padding: 0 5px;
    border: 1px solid ${edge};
    border-radius: 0;
    background: linear-gradient(#fff, #f3f4f5);
    color: inherit;
    font: inherit;
    appearance: none;
}
`

const FilterArrow = styled.span`
display: flex;
align-items: center;
justify-content: center;
justify-self: end;
width: 15px;
border: 1px solid ${edge};
pointer-events: none;
`

const Marker = styled.svg`
position: absolute;
top: 401px;
left: 0;
width: 210px;
height: 180px;
pointer-events: none;
path {
    fill: none;
    stroke: #f00;
    stroke-width: 3px;
    stroke-linecap: round;
}
`
